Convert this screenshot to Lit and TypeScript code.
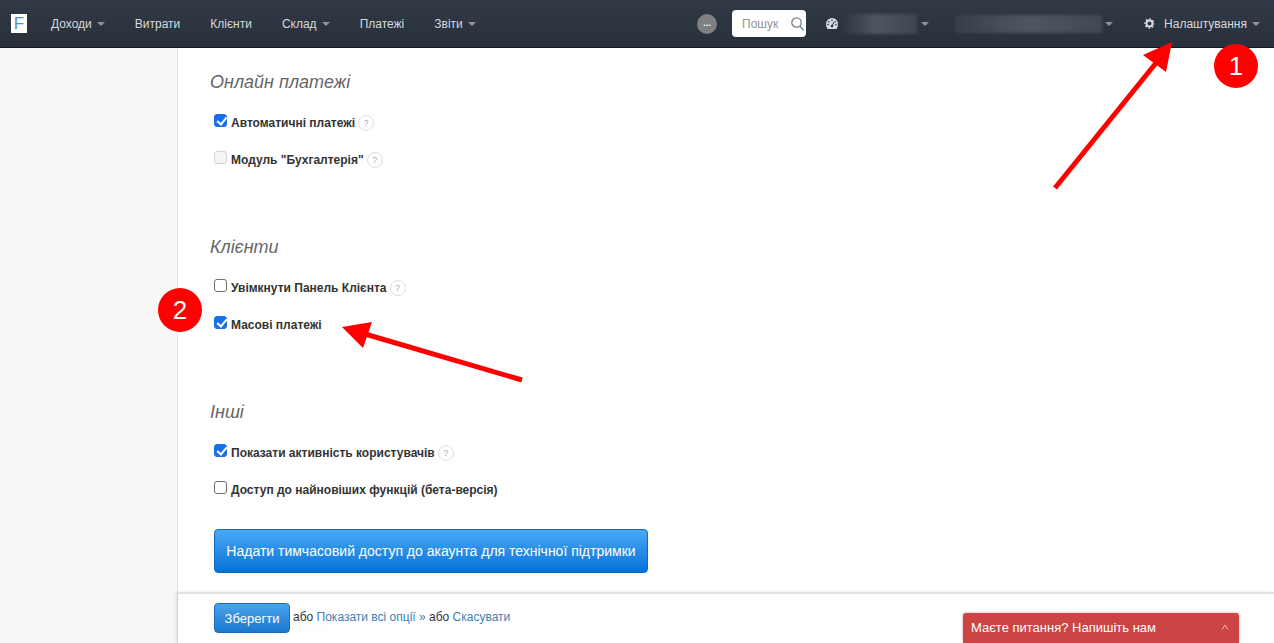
import { LitElement, html, css, svg } from "lit";
import { customElement } from "lit/decorators.js";

const caret = html`<span class="caret"></span>`;
const help = html`<span class="help">?</span>`;

@customElement("app-root")
export class AppRoot extends LitElement {
  static styles = css`
    :host { display: block; position: relative; width: 1274px; height: 643px; overflow: hidden; background: #fff;
      font-family: "Liberation Sans", Arial, sans-serif; font-size: 12px; color: #333; }
    * { box-sizing: border-box; }
    .nav { height: 48px; display: flex; align-items: center; padding: 0 14px 0 11px; color: #d5d9de;
      background: linear-gradient(#303945, #28303b); border-bottom: 1px solid #11161c; font-size: 12px; }
    .logo { width: 16px; height: 19px; margin-right: 24px; background: #fff; color: #4f93bd; font-size: 17px; line-height: 19px; text-align: center; }
    .menu { display: flex; gap: 30px; align-items: center; }
    .item { display: flex; align-items: center; white-space: nowrap; }
    .caret { display: inline-block; margin-left: 5px; margin-top: 1px; border: 4px solid transparent; border-top-color: #8d949c; border-bottom: 0; }
    .right { margin-left: auto; display: flex; align-items: center; }
    .dots { width: 20px; height: 20px; border-radius: 50%; background: #808080; color: #fff; font-size: 9px; font-weight: bold; line-height: 18px; text-align: center; }
    .search { margin-left: 15px; width: 74px; height: 27px; background: #fff; border-radius: 4px; color: #959595; display: flex; align-items: center; padding-left: 10px; gap: 13px; font-size: 12px; }
    .gauge { margin-left: 20px; display: flex; }
    .blur { height: 20px; filter: blur(1.5px); }
    .b1 { width: 75px; margin-left: 4px; background: linear-gradient(90deg, #2c3440, #4d5661 45%, #3d4651); }
    .b1 + .caret { margin-left: 4px; }
    .b2 { width: 147px; margin-left: 26px; height: 18px; background: linear-gradient(90deg, #363f4a, #4d5661 50%, #3f4853); }
    .b2 + .caret { margin-left: 3px; }
    .gear { margin-left: 31px; margin-right: 9px; display: flex; }
    .body { display: flex; height: 595px; }
    .side { width: 178px; flex: none; background: #f7f7f7; border-right: 1px solid #dfe3e8; }
    .main { flex: 1; padding: 22px 0 0 32px; }
    .section { height: 165px; display: flex; flex-direction: column; }
    .section.last { height: auto; }
    h3 { margin: 0 0 19px; height: 24px; flex: none; font-size: 18px; line-height: 24px; font-weight: normal; font-style: italic; color: #666; }
    .row { height: 20px; flex: none; display: flex; align-items: center; margin: 0 0 17px 4px; font-weight: bold; font-size: 12px; color: #333; }
    input { appearance: none; -webkit-appearance: none; width: 13px; height: 13px; margin: -5px 4px 0 0; flex: none; position: relative;
      border: 1px solid #6e6e6e; border-radius: 3px; background: #fff; }
    input:checked { background: #1a6fe6; border-color: #1a6fe6; }
    input:checked::after { content: ""; position: absolute; left: 3.5px; top: 0; width: 4px; height: 8px; border: solid #fff; border-width: 0 2.2px 2.2px 0; transform: rotate(40deg); }
    input:disabled { border-color: #d4d4d4; background: #f4f4f4; }
    .help { width: 16px; height: 16px; margin-left: 3px; border: 1px solid #ddd; border-radius: 50%; color: #aaa; font-size: 9px; font-weight: normal; line-height: 14px; text-align: center; }
    .support { margin: 12px 0 0 4px; width: 434px; height: 44px; flex: none; border: 1px solid #0a6bc0; border-radius: 4px; color: #fff; font: 14px "Liberation Sans", Arial, sans-serif;
      background: linear-gradient(#4ba8f5, #0672d6); padding: 0; }
    .ghost { position: absolute; left: 214px; top: 610px; width: 146px; height: 25px; padding-top: 8px; text-align: center; color: #ccc; border: 1px solid #f0f0f0; border-radius: 4px; font-size: 12px; }
    .footer { position: absolute; left: 178px; right: 0; top: 592px; height: 51px; border-top: 2px solid #e2e2e2; padding: 9px 0 0 36px;
      display: flex; align-items: flex-start; background: rgba(255,255,255,.9); box-shadow: -2px 0 3px rgba(0,0,0,.1); }
    .save { width: 76px; height: 30px; padding: 0; border: 1px solid #1a6fb8; border-radius: 4px; color: #fff; font: 13px "Liberation Sans", Arial, sans-serif;
      background: linear-gradient(#4ba3ea, #1b78d0); margin-right: 3px; }
    .links { line-height: 28px; font-size: 12px; white-space: pre; }
    .links a { color: #3d7fb5; text-decoration: none; }
    .chat { position: absolute; left: 963px; top: 613px; width: 276px; height: 30px; background: #cc4444; color: #fff; border-radius: 3px 3px 0 0;
      box-shadow: 0 0 3px rgba(204,68,68,.5); display: flex; justify-content: space-between; align-items: center; padding: 0 10px 2px 8px; font-size: 13px; }
    .overlay { position: absolute; left: 0; top: 0; pointer-events: none; }
    .num { position: absolute; width: 44px; height: 44px; border-radius: 50%; background: #f00; color: #fff; font-size: 26px; line-height: 44px; text-align: center; }
    .n1 { left: 1214px; top: 44px; }
    .n2 { left: 158px; top: 288px; }
  `;

  private row(label: string, opts: { checked?: boolean; disabled?: boolean; help?: boolean } = {}) {
    return html`<label class="row"><input type="checkbox" .checked=${!!opts.checked} ?disabled=${opts.disabled} />${label}${opts.help ? help : ""}</label>`;
  }

  render() {
    return html`
      <nav class="nav">
        <div class="logo">F</div>
        <div class="menu">
          <span class="item">Доходи${caret}</span>
          <span class="item">Витрати</span>
          <span class="item">Клієнти</span>
          <span class="item">Склад${caret}</span>
          <span class="item">Платежі</span>
          <span class="item">Звіти${caret}</span>
        </div>
        <div class="right">
          <div class="dots">...</div>
          <div class="search">Пошук
            <svg width="13" height="14" viewBox="0 0 13 14" fill="none" stroke="#6f7f8a" stroke-width="1.3"><circle cx="5.500" cy="5.500" r="4.700"/><path d="M9 9.300 12.500 13.300"/></svg>
          </div>
          <span class="gauge"><svg width="12" height="11" viewBox="0 0 12 11"><path fill="#d5d9de" d="M6 0a6 6 0 0 0-6 6c0 1.900.6 3.500 1.500 5h9c.9-1.500 1.500-3.100 1.500-5a6 6 0 0 0-6-6z"/><circle cx="6" cy="2.300" r=".8" fill="#2c3440"/><circle cx="2.800" cy="3.700" r=".8" fill="#2c3440"/><circle cx="9.200" cy="3.700" r=".8" fill="#2c3440"/><circle cx="2" cy="6.600" r=".8" fill="#2c3440"/><circle cx="10" cy="6.600" r=".8" fill="#2c3440"/><circle cx="6" cy="8" r="1.300" fill="#2c3440"/><path d="M6 8 8 4" stroke="#2c3440" stroke-width="1"/></svg></span>
          <div class="blur b1"></div>${caret}
          <div class="blur b2"></div>${caret}
          <span class="gear"><svg width="11" height="11" viewBox="0 0 11 11" fill="none" stroke="#d5d9de"><circle cx="5.500" cy="5.500" r="3" stroke-width="2"/><circle cx="5.500" cy="5.500" r="4.500" stroke-width="1.400" stroke-dasharray="1.770 1.770" stroke-dashoffset=".88"/></svg></span>
          <span class="item">Налаштування${caret}</span>
        </div>
      </nav>
      <div class="body">
        <aside class="side"></aside>
        <main class="main">
          <section class="section">
            <h3>Онлайн платежі</h3>
            ${this.row("Автоматичні платежі", { checked: true, help: true })}
            ${this.row('Модуль "Бухгалтерія"', { disabled: true, help: true })}
          </section>
          <section class="section">
            <h3>Клієнти</h3>
            ${this.row("Увімкнути Панель Клієнта", { help: true })}
            ${this.row("Масові платежі", { checked: true })}
          </section>
          <section class="section last">
            <h3>Інші</h3>
            ${this.row("Показати активність користувачів", { checked: true, help: true })}
            ${this.row("Доступ до найновіших функцій (бета-версія)")}
            <button class="support">Надати тимчасовий доступ до акаунта для технічної підтримки</button>
          </section>
        </main>
      </div>
      <div class="ghost">Надати акаунт</div>
      <div class="footer">
        <button class="save">Зберегти</button>
        <span class="links">або <a>Показати всі опції »</a> або <a>Скасувати</a></span>
      </div>
      <div class="chat"><span>Маєте питання? Напишіть нам</span>
        <svg width="8" height="6" viewBox="0 0 8 6" fill="none" stroke="#eeb8b8"><path d="M1 5.500 4 1l3 4.500"/></svg>
      </div>
      <svg class="overlay" width="1274" height="643" viewBox="0 0 1274 643">
        ${svg`<path d="M1055 188 1156 63" stroke="#f00" stroke-width="5"/><path fill="#f00" d="M1172 42 1143 55 1166 72z"/>
        <path d="M522 380 365 334" stroke="#f00" stroke-width="5"/><path fill="#f00" d="M342 327 372 322 363 348z"/>`}
      </svg>
      <div class="num n1">1</div>
      <div class="num n2">2</div>
    `;
  }
}
